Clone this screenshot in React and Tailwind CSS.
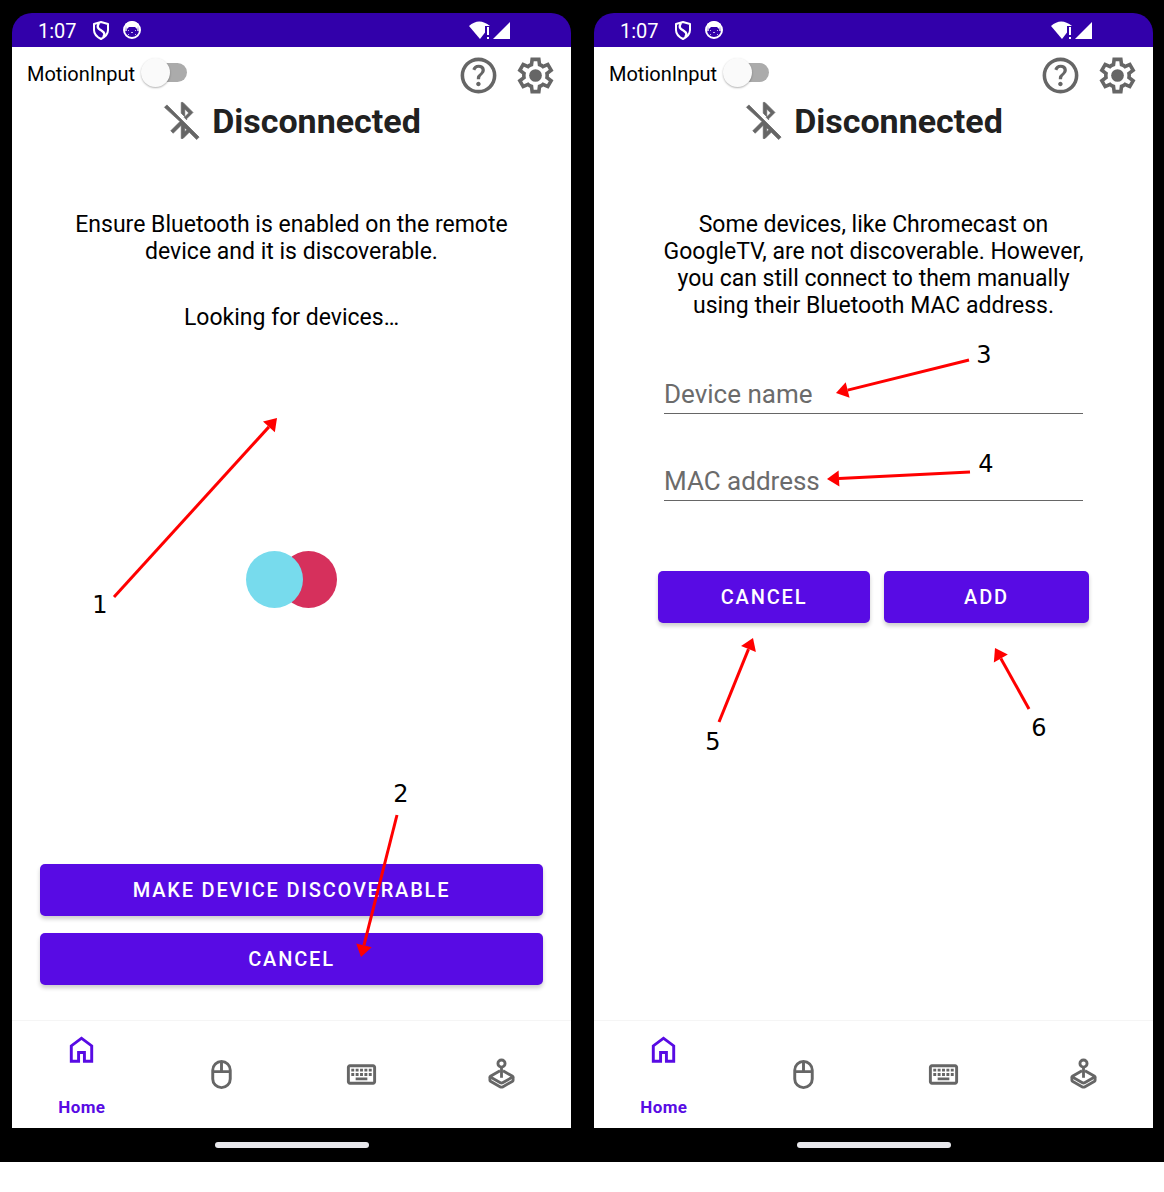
import React, { useId } from "react";

function Symbol({ className, children }) {
  return (
    <svg viewBox="0 -960 960 960" fill="currentColor" className={className} aria-hidden="true">
      {children}
    </svg>
  );
}

const HelpIcon = () => (
  <Symbol className="size-[43px]">
    <path d="M478-240q21 0 35.5-14.5T528-290q0-21-14.5-35.5T478-340q-21 0-35.5 14.5T428-290q0 21 14.5 35.5T478-240Zm-36-154h74q0-33 7.5-52t42.5-52q26-26 41-49.5t15-56.5q0-56-41-86t-97-30q-57 0-92.5 30T342-618l66 26q5-18 22.5-39t53.5-21q32 0 48 17.5t16 38.5q0 20-12 37.5T506-526q-44 39-54 59t-10 73Zm38 314q-83 0-156-31.5T197-197q-54-54-85.5-127T80-480q0-83 31.5-156T197-763q54-54 127-85.5T480-880q83 0 156 31.5T763-763q54 54 85.5 127T880-480q0 83-31.5 156T763-197q-54 54-127 85.5T480-80Zm0-80q134 0 227-93t93-227q0-134-93-227t-227-93q-134 0-227 93t-93 227q0 134 93 227t227 93Z" />
  </Symbol>
);

const SettingsIcon = () => (
  <Symbol className="size-[43px]">
    <path d="m370-80-16-128q-13-5-24.5-12T307-235l-119 50L78-375l103-78q-1-7-1-13.5v-27q0-6.5 1-13.5L78-585l110-190 119 50q11-8 23-15t24-12l16-128h220l16 128q13 5 24.5 12t22.5 15l119-50 110 190-103 78q1 7 1 13.5v27q0 6.5-2 13.5l103 78-110 190-118-50q-11 8-23 15t-24 12L590-80H370Zm70-80h79l14-106q31-8 57.500-23.500T639-327l99 41 39-68-86-65q5-14 7-29.500t2-31.500q0-16-2-31.500t-7-29.500l86-65-39-68-99 42q-22-23-48.500-38.500T533-694l-13-106h-79l-14 106q-31 8-57.500 23.500T321-633l-99-41-39 68 86 64q-5 15-7 30t-2 32q0 16 2 31t7 30l-86 65 39 68 99-42q22 23 48.500 38.500T427-266l13 106Z" />
    <circle cx="480" cy="-480" r="142" />
  </Symbol>
);

const BluetoothOffIcon = () => (
  <Symbol className="size-[42px] text-[#666666]">
    <path
      stroke="currentColor"
      strokeWidth="16"
      d="M792-56 624-224 480-80h-40v-304L256-200l-56-56 212-212L56-792l56-56 736 736-56 56ZM520-232l46-48-46-46v94Zm44-274-56-56 102-102-90-90v176l-80-80v-246h40l228 228-144 144Z"
    />
  </Symbol>
);

const HomeIcon = () => (
  <Symbol className="size-[35px]">
    <path d="M240-200h120v-240h240v240h120v-360L480-740 240-560v360Zm-80 80v-480l320-240 320 240v480H520v-240h-80v240H160Z" />
  </Symbol>
);

const MouseIcon = () => (
  <Symbol className="size-[35px]">
    <path d="M480-80q-116 0-198-82t-82-198v-240q0-116 82-198t198-82q116 0 198 82t82 198v240q0 116-82 198T480-80Zm40-520h160q0-72-45.5-127T520-796v196Zm-240 0h160v-196q-69 14-114.5 69T280-600Zm200 440q83 0 141.5-58.5T680-360v-160H280v160q0 83 58.5 141.5T480-160Z" />
  </Symbol>
);

const KeyboardIcon = () => (
  <Symbol className="size-[35px]">
    <path d="M160-200q-33 0-56.5-23.5T80-280v-400q0-33 23.5-56.5T160-760h640q33 0 56.5 23.5T880-680v400q0 33-23.5 56.5T800-200H160Zm0-80h640v-400H160v400Zm160-40h320v-80H320v80ZM200-440h80v-80h-80v80Zm120 0h80v-80h-80v80Zm120 0h80v-80h-80v80Zm120 0h80v-80h-80v80Zm120 0h80v-80h-80v80ZM200-560h80v-80h-80v80Zm120 0h80v-80h-80v80Zm120 0h80v-80h-80v80Zm120 0h80v-80h-80v80Zm120 0h80v-80h-80v80Z" />
  </Symbol>
);

const JoystickIcon = () => (
  <Symbol className="size-[35px]">
    <g fill="none" stroke="currentColor" strokeWidth="78" strokeLinejoin="round">
      <circle cx="480" cy="-780" r="98" />
      <path d="M480-690v300" />
      <path d="M440-585 175-430q-18 10 0 21l275 155q30 16 60 0l275-155q18-11 0-21L520-585" />
      <path d="M162-420v100q0 16 14 24l274 156q30 16 60 0l274-156q14-8 14-24v-100" />
    </g>
  </Symbol>
);

function StatusBar() {
  return (
    <div className="flex h-[34px] items-center rounded-t-[20px] bg-[#3200AA] pl-[26px] pr-[60px] text-white">
      <span className="pt-[2px] text-xl leading-none">1:07</span>
      <svg viewBox="0 0 18 20" className="ml-[15px] h-5 w-[18px]" aria-hidden="true" fill="none" stroke="currentColor" strokeLinejoin="round">
        <path d="M2 4 9 2l7 2v6c0 4-3 7-7 9-4-2-7-5-7-9z" strokeWidth="2" />
        <path d="M7 3C4 8 7 9 10 11s3 4 1 6" strokeWidth="2.4" />
      </svg>
      <svg viewBox="0 0 20 20" className="ml-3 size-5" aria-hidden="true">
        <circle cx="10" cy="10" r="8" fill="none" stroke="currentColor" strokeWidth="2" />
        <path d="M3 4Q10-2 17 4L15 9l-2-2H7L5 9z" fill="currentColor" />
        <path d="M3 7h2v4H3zM15 7h2v4h-2zM6 10h1v1H6zM13 10h1v1h-1zM9 12h2v1H9zM6 14h1v1H6zM13 14h1v1h-1z" fill="currentColor" opacity="0.7" />
      </svg>
      <svg viewBox="0 0 42 20" className="ml-auto h-5 w-[42px]" aria-hidden="true" fill="currentColor">
        <path d="M0 6Q10-3 21 6L11 19z" />
        <path d="M16 6h6v13h-6z" className="fill-[#3200AA]" />
        <path d="M18 7h2v8h-2zM18 17h2v2h-2z" />
        <path d="M41 2v17H24z" />
      </svg>
    </div>
  );
}

function Header() {
  const id = useId();
  return (
    <header>
      <div className="flex h-[51px] items-start pl-[15px] pr-[14px]">
        <label htmlFor={id} className="pt-[15px] text-xl leading-6 text-black">
          MotionInput
        </label>
        <input
          id={id}
          type="checkbox"
          role="switch"
          className="relative ml-[6px] mt-[11px] h-[29px] w-[46px] appearance-none before:absolute before:right-0 before:top-[5px] before:h-[19px] before:w-9 before:rounded-full before:bg-[#ABABAB] after:absolute after:left-0 after:top-0 after:size-[29px] after:rounded-full after:bg-[#FAFAFA] after:shadow-[0_1px_2px_rgba(0,0,0,0.3)]"
        />
        <div className="ml-auto flex gap-[14px] pt-[7px] text-[#666666]">
          <button type="button" aria-label="Help">
            <HelpIcon />
          </button>
          <button type="button" aria-label="Settings">
            <SettingsIcon />
          </button>
        </div>
      </div>
      <div className="flex h-[46px] items-center justify-center gap-2">
        <BluetoothOffIcon />
        <h1 className="text-[34px] font-bold leading-[46px] text-[#212121]">Disconnected</h1>
      </div>
    </header>
  );
}

function ActionButton({ className = "", children }) {
  return (
    <button
      type="button"
      className={
        "h-[52px] rounded-[5px] bg-[#580BE4] text-xl font-medium uppercase tracking-[0.09em] text-white shadow-[0_3px_4px_rgba(0,0,0,0.2)] " +
        className
      }
    >
      {children}
    </button>
  );
}

function NavBar() {
  const items = [
    { name: "Mouse", Icon: MouseIcon },
    { name: "Keyboard", Icon: KeyboardIcon },
    { name: "Joystick", Icon: JoystickIcon },
  ];
  return (
    <nav className="grid h-[108px] grid-cols-4 border-t border-[#F5F5F5] text-[#666666]">
      <a href="#home" className="flex flex-col items-center justify-between pb-[9px] pt-[11px] text-[#580BE4]">
        <HomeIcon />
        <span className="text-[17px] font-bold leading-6 tracking-wide">Home</span>
      </a>
      {items.map(({ name, Icon }) => (
        <a key={name} href={"#" + name.toLowerCase()} aria-label={name} className="flex items-center justify-center">
          <Icon />
        </a>
      ))}
    </nav>
  );
}

function Arrow({ from, to }) {
  const [x1, y1] = from;
  const [x2, y2] = to;
  const length = Math.hypot(x2 - x1, y2 - y1);
  const ux = (x2 - x1) / length;
  const uy = (y2 - y1) / length;
  const bx = x2 - ux * 12;
  const by = y2 - uy * 12;
  const head = [
    [x2, y2],
    [bx - uy * 8, by + ux * 8],
    [bx + uy * 8, by - ux * 8],
  ];
  return (
    <g>
      <line x1={x1} y1={y1} x2={bx} y2={by} stroke="#FF0000" strokeWidth="3" />
      <polygon points={head.map((p) => p.join(",")).join(" ")} fill="#FF0000" />
    </g>
  );
}

function Callouts({ items }) {
  return (
    <svg viewBox="0 0 559 1149" className="pointer-events-none absolute inset-0 size-full">
      {items.map((item) => (
        <g key={item.label}>
          <Arrow from={item.from} to={item.to} />
          <text x={item.at[0]} y={item.at[1]} textAnchor="middle" className="fill-black font-['DejaVu_Sans',sans-serif] text-2xl">
            {item.label}
          </text>
        </g>
      ))}
    </svg>
  );
}

function Phone({ callouts, children }) {
  return (
    <section className="relative flex flex-col">
      <StatusBar />
      <div className="flex flex-1 flex-col bg-white">
        <Header />
        <main className="flex flex-1 flex-col pt-[67px]">{children}</main>
        <NavBar />
      </div>
      <div className="flex h-[34px] items-center justify-center">
        <div className="h-[6px] w-[154px] rounded-full bg-[#E8E8EC]" />
      </div>
      <Callouts items={callouts} />
    </section>
  );
}

const scanCallouts = [
  { label: "1", at: [88, 600], from: [102, 584], to: [265, 405] },
  { label: "2", at: [389, 789], from: [385, 802], to: [349, 944] },
];

const manualCallouts = [
  { label: "3", at: [390, 350], from: [375, 347], to: [242, 380] },
  { label: "4", at: [392, 459], from: [376, 459], to: [233, 466] },
  { label: "5", at: [119, 737], from: [125, 709], to: [159, 625] },
  { label: "6", at: [445, 723], from: [435, 696], to: [401, 635] },
];

const fieldClass =
  "w-full border-b border-[#666666] bg-white pb-px text-[26px] leading-9 text-black outline-none placeholder:text-[#6B6B6B] placeholder:opacity-100";

export default function App() {
  return (
    <div className="bg-white font-[Roboto,sans-serif]">
      <div className="grid grid-cols-2 gap-x-[23px] bg-black pl-3 pr-[11px] pt-[13px]">
        <Phone callouts={scanCallouts}>
          <div className="px-14 text-center text-[23px] leading-[27px] text-black">
            <p>Ensure Bluetooth is enabled on the remote device and it is discoverable.</p>
            <p className="mt-[39px]">Looking for devices…</p>
          </div>
          <div className="mt-[220px] flex justify-center" role="status" aria-label="Scanning">
            <div className="z-10 size-[57px] rounded-full bg-[#77DBED]" />
            <div className="-ml-[23px] size-[57px] rounded-full bg-[#D6305C]" />
          </div>
          <div className="mt-auto flex flex-col gap-[17px] px-7 pb-[35px] pt-[256px]">
            <ActionButton>Make device discoverable</ActionButton>
            <ActionButton>Cancel</ActionButton>
          </div>
        </Phone>
        <Phone callouts={manualCallouts}>
          <p className="px-16 text-center text-[23px] leading-[27px] text-black">
            Some devices, like Chromecast on GoogleTV, are not discoverable. However, you can still connect to them
            manually using their Bluetooth MAC address.
          </p>
          <form className="px-16">
            <div className="flex flex-col gap-[49px] px-[6px] pt-[57px]">
              <input type="text" aria-label="Device name" placeholder="Device name" className={fieldClass} />
              <input type="text" aria-label="MAC address" placeholder="MAC address" className={fieldClass} />
            </div>
            <div className="mt-[70px] flex gap-[14px]">
              <ActionButton className="w-[212px]">Cancel</ActionButton>
              <ActionButton className="flex-1">Add</ActionButton>
            </div>
          </form>
        </Phone>
      </div>
    </div>
  );
}
